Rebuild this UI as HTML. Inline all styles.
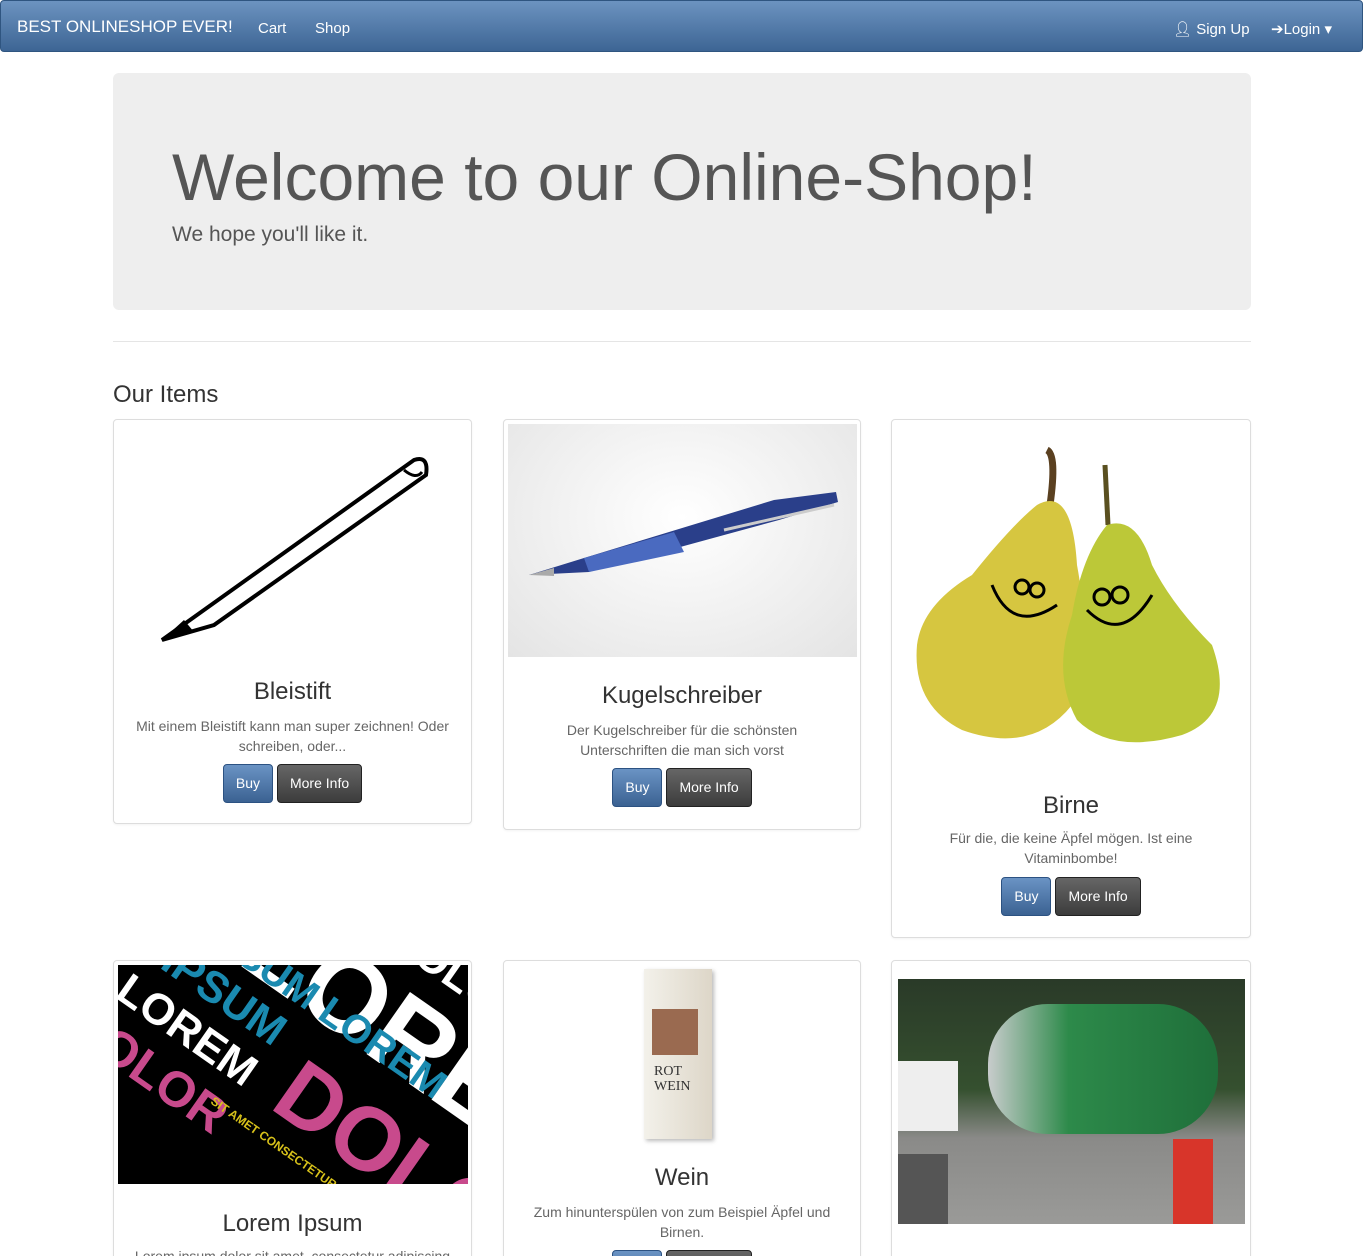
<!DOCTYPE html>
<html><head><meta charset="utf-8"><style>
*{box-sizing:border-box;margin:0;padding:0}
html,body{width:1363px;height:1256px;overflow:hidden}
body{background:#fff;font-family:"Liberation Sans",sans-serif;color:#333;position:relative}
.abs{position:absolute}
.nav{left:0;top:0;width:1363px;height:52px;background:linear-gradient(#6c93c0,#3d6594);border:1px solid #2f5580;border-radius:4px}
.nav span{position:absolute;color:#fff;font-size:15px;top:19px}
.jumbo{left:113px;top:73px;width:1138px;height:237px;background:#eee;border-radius:6px}
.card{position:absolute;border:1px solid #ddd;border-radius:4px;background:#fff;box-shadow:0 1px 2px rgba(0,0,0,.05);overflow:hidden}
.t{position:absolute;left:0;width:100%;text-align:center;font-size:24px;color:#333}
.d{position:absolute;left:0;width:100%;text-align:center;font-size:14px;line-height:20px;color:#666;padding:0 12px}
.btns{position:absolute;left:0;width:100%;text-align:center;font-size:0}
.b{display:inline-block;height:39px;line-height:37px;font-size:14px;color:#fff;border-radius:4px;padding:0 12px;margin:0 2px;vertical-align:top}
.buy{background:linear-gradient(#6a93c4,#3b6292);border:1px solid #2c5282}
.mi{background:linear-gradient(#666,#3c3c3c);border:1px solid #222}
.lw{position:absolute;font-weight:bold;white-space:nowrap}
</style></head><body>
<div class="abs nav">
<span style="left:16px;top:16px;font-size:17px">BEST ONLINESHOP EVER!</span>
<span style="left:257px">Cart</span>
<span style="left:314px">Shop</span>
<span style="left:1172px">&#128100;&#xFE0E; Sign Up</span>
<span style="left:1270px">&#x2794;Login ▾</span>
</div>
<div class="abs jumbo">
<div class="abs" style="left:59px;top:66px;font-size:66px;color:#555;white-space:nowrap">Welcome to our Online-Shop!</div>
<div class="abs" style="left:59px;top:150px;font-size:21px;color:#555">We hope you'll like it.</div>
</div>
<div class="abs" style="left:113px;top:341px;width:1138px;height:1px;background:#e5e5e5"></div>
<div class="abs" style="left:113px;top:381px;font-size:24px;color:#333">Our Items</div>

<div class="card" style="left:113px;top:419px;width:359px;height:405px">
<svg class="abs" style="left:40px;top:20px" width="290" height="210"><path d="M8 200 L260 20 Q275 15 272 35 L60 185 Z" fill="none" stroke="#000" stroke-width="4"/><path d="M8 200 L30 180 L40 192 Z" fill="#000"/><path d="M250 30 Q262 40 268 32" stroke="#000" stroke-width="3" fill="none"/></svg>
<div class="t" style="top:258px">Bleistift</div>
<div class="d" style="top:296px">Mit einem Bleistift kann man super zeichnen! Oder schreiben, oder...</div>
<div class="btns" style="top:344px"><span class="b buy">Buy</span><span class="b mi">More Info</span></div>
</div>

<div class="card" style="left:503px;top:419px;width:358px;height:411px">
<div class="abs" style="left:4px;top:4px;width:349px;height:233px;background:radial-gradient(ellipse at 50% 40%,#fff,#e4e4e4)"></div>
<svg class="abs" style="left:20px;top:60px" width="320" height="110"><path d="M5 95 L60 78 L250 20 L312 12 L314 22 L255 40 L65 92 Z" fill="#2a3f8a"/><path d="M60 78 L150 52 L160 72 L65 92 Z" fill="#4a6ac0"/><path d="M5 95 L30 88 L30 96Z" fill="#aaa"/><path d="M200 50 L310 25" stroke="#ccc" stroke-width="3"/></svg>
<div class="t" style="top:262px">Kugelschreiber</div>
<div class="d" style="top:300px;padding:0 50px">Der Kugelschreiber für die schönsten Unterschriften die man sich vorst</div>
<div class="btns" style="top:348px"><span class="b buy">Buy</span><span class="b mi">More Info</span></div>
</div>

<div class="card" style="left:891px;top:419px;width:360px;height:519px">
<svg class="abs" style="left:20px;top:25px" width="320" height="300"><path d="M135 5 Q145 10 138 60" stroke="#5a4020" stroke-width="7" fill="none"/><path d="M193 20 L196 80" stroke="#5a5020" stroke-width="5"/><path d="M125 60 Q160 40 165 120 Q180 200 160 260 Q120 310 50 285 Q0 260 5 200 Q10 160 60 130 Q100 80 125 60Z" fill="#d6c640"/><path d="M195 80 Q225 70 240 120 Q260 160 300 200 Q325 270 270 290 Q200 310 165 275 Q140 230 160 170 Q170 110 195 80Z" fill="#bcc838"/><path d="M80 140 Q100 190 145 160 M175 165 Q210 200 240 150" stroke="#000" stroke-width="3" fill="none"/><circle cx="110" cy="142" r="7" fill="none" stroke="#000" stroke-width="3"/><circle cx="125" cy="145" r="7" fill="none" stroke="#000" stroke-width="3"/><circle cx="190" cy="152" r="8" fill="none" stroke="#000" stroke-width="3"/><circle cx="208" cy="150" r="8" fill="none" stroke="#000" stroke-width="3"/></svg>
<div class="t" style="top:372px">Birne</div>
<div class="d" style="top:408px;padding:0 45px">Für die, die keine Äpfel mögen. Ist eine Vitaminbombe!</div>
<div class="btns" style="top:457px"><span class="b buy">Buy</span><span class="b mi">More Info</span></div>
</div>

<div class="card" style="left:113px;top:960px;width:359px;height:310px">
<div class="abs" style="left:4px;top:4px;width:350px;height:219px;background:#000;overflow:hidden">
<div style="position:absolute;left:-60px;top:-80px;width:500px;height:400px;transform:rotate(35deg)">
<div class="lw" style="left:120px;top:40px;font-size:110px;color:#fff">LOREM</div>
<div class="lw" style="left:60px;top:150px;font-size:44px;color:#1a8ab0">IPSUM</div>
<div class="lw" style="left:230px;top:160px;font-size:90px;color:#c84a8c">DOLOR</div>
<div class="lw" style="left:40px;top:200px;font-size:44px;color:#fff">LOREM</div>
<div class="lw" style="left:20px;top:250px;font-size:50px;color:#c84a8c">DOLOR</div>
<div class="lw" style="left:60px;top:0px;font-size:44px;color:#fff">LOREM DOLOR</div>
<div class="lw" style="left:80px;top:105px;font-size:40px;color:#1a8ab0">IPSUM LOREM</div>
<div class="lw" style="left:180px;top:260px;font-size:12px;color:#d8c21a">SIT AMET CONSECTETUR ADIPI</div>
</div>
</div>
<div class="t" style="top:249px">Lorem Ipsum</div>
<div class="d" style="top:285px">Lorem ipsum dolor sit amet, consectetur adipiscing</div>
</div>

<div class="card" style="left:503px;top:960px;width:358px;height:310px">
<div class="abs" style="left:140px;top:8px;width:68px;height:170px;background:linear-gradient(90deg,#f3f1ea,#ddd6c8);box-shadow:2px 2px 4px #bbb">
<div class="abs" style="left:8px;top:40px;width:46px;height:46px;background:#9a6a50"></div>
<div class="abs" style="left:10px;top:95px;font-family:'Liberation Serif',serif;font-size:14px;color:#333;line-height:15px">ROT<br>WEIN</div></div>
<div class="t" style="top:203px">Wein</div>
<div class="d" style="top:241px">Zum hinunterspülen von zum Beispiel Äpfel und Birnen.</div>
<div class="btns" style="top:289px"><span class="b buy">Buy</span><span class="b mi">More Info</span></div>
</div>

<div class="card" style="left:891px;top:960px;width:360px;height:310px">
<div class="abs" style="left:6px;top:18px;width:347px;height:245px;background:linear-gradient(#2a3a28 0%,#35502f 45%,#8a8a88 65%,#9a9a98 100%);overflow:hidden">
<div class="abs" style="left:0;top:82px;width:60px;height:70px;background:#eee"></div>
<div class="abs" style="left:90px;top:25px;width:230px;height:130px;border-radius:60px;background:linear-gradient(90deg,#c8cccc,#2d8a4a 35%,#1f6f3a)"></div>
<div class="abs" style="left:275px;top:160px;width:40px;height:85px;background:#d8352a"></div>
<div class="abs" style="left:0;top:175px;width:50px;height:70px;background:#555"></div>
</div>
</div>
</body></html>
